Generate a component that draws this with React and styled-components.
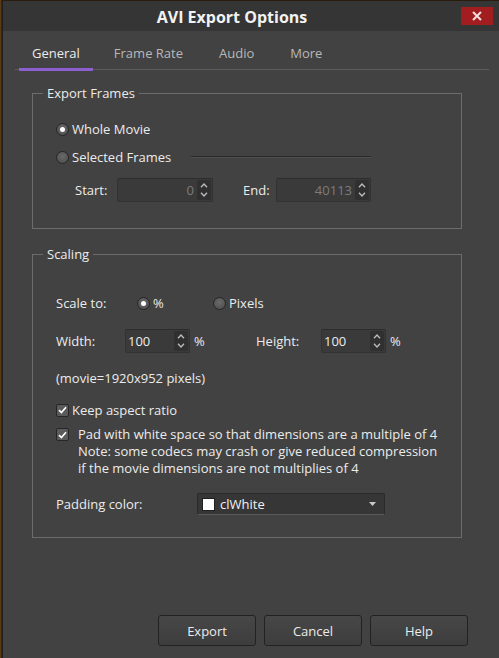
import React from 'react';
import styled, { createGlobalStyle } from 'styled-components';

const GlobalStyle = createGlobalStyle`
  html, body {
    margin: 0;
    padding: 0;
    background: #1c140c;
  }
  body {
    font-family: "Open Sans", "Noto Sans", sans-serif;
    font-size: 12px;
    color: #e8e8e8;
  }
`;

const Desktop = styled.div`
  width: 499px;
  height: 658px;
  overflow: hidden;
  padding: 1px 0 0 2px;
  box-sizing: border-box;
  background: linear-gradient(90deg, #6a4418 0, #2a1c0c 2px);
`;

const Window = styled.div`
  height: 657px;
  display: flex;
  flex-direction: column;
  background: #424242;
  border-left: 1px solid #1f1f1f;
  box-sizing: border-box;
`;

const TitleBar = styled.div`
  height: 30px;
  flex-shrink: 0;
  display: flex;
  align-items: center;
  background: #353535;
`;

const Title = styled.div`
  flex: 1;
  text-align: center;
  font-size: 16px;
  font-weight: 700;
  color: #f2f2f2;
  padding-top: 1px;
`;

const CloseButton = styled.div`
  width: 32px;
  height: 18px;
  margin: 0 6px 0 0;
  background: #a21d1f;
  display: flex;
  align-items: center;
  justify-content: center;
`;

const TabBar = styled.div`
  display: flex;
  margin: 0 10px 0 12px;
  height: 39px;
  border-bottom: 1px solid #5c5c5c;
  box-sizing: border-box;
`;

const Tab = styled.div`
  padding: 6px 13px 0;
  margin: 0 4px -2px ${p => 4 + (p.$extra || 0)}px;
  display: flex;
  align-items: center;
  font-size: 13px;
  color: ${p => (p.$active ? '#ececec' : '#b8b8b8')};
  border-bottom: 3px solid ${p => (p.$active ? '#8b5fcf' : 'transparent')};
`;

const Body = styled.div`
  padding: 0 37px 0 29px;
  flex: 1;
  display: flex;
  flex-direction: column;
`;

const Group = styled.fieldset`
  margin: ${p => p.$top}px 0 0 0;
  padding: 0 0 ${p => p.$bottom}px 23px;
  border: 1px solid #6c6c6c;
  min-width: 0;
`;

const Legend = styled.legend`
  margin-left: -13px;
  padding: 0 4px;
  font-size: 13px;
  line-height: 16px;
  color: #ececec;
`;

const Row = styled.div`
  display: flex;
  align-items: ${p => (p.$top_align ? 'flex-start' : 'center')};
  height: ${p => p.$h || 20}px;
  margin-top: ${p => p.$top}px;
  padding-left: ${p => p.$indent || 0}px;
`;

const Label = styled.span`
  font-size: 13px;
  color: #ececec;
  width: ${p => (p.$w ? `${p.$w}px` : 'auto')};
  flex-shrink: 0;
`;

const RadioCircle = styled.span`
  width: 13px;
  height: 13px;
  border-radius: 50%;
  box-sizing: border-box;
  border: 1px solid #262626;
  background: radial-gradient(circle at 50% 40%, #6a6a6a, #4a4a4a);
  display: flex;
  align-items: center;
  justify-content: center;
  margin-right: 3px;
  flex-shrink: 0;
  &::after {
    content: '';
    width: 5px;
    height: 5px;
    border-radius: 50%;
    background: ${p => (p.$on ? '#ffffff' : 'transparent')};
  }
`;

const Radio = styled.span`
  display: flex;
  align-items: center;
  width: ${p => (p.$w ? `${p.$w}px` : 'auto')};
  font-size: 13px;
  color: #ececec;
`;

const Box = styled.span`
  width: 13px;
  height: 13px;
  box-sizing: border-box;
  border: 1px solid #262626;
  border-radius: 2px;
  background: #5a5a5a;
  display: flex;
  align-items: center;
  justify-content: center;
  margin-right: ${p => p.$gap}px;
  margin-top: ${p => p.$drop || 0}px;
  flex-shrink: 0;
`;

const Divider = styled.div`
  flex: 1;
  height: 0;
  margin: 0 90px 0 20px;
  border-top: 1px solid #2a2a2a;
  border-bottom: 1px solid #4e4e4e;
`;

const Spin = styled.div`
  width: ${p => p.$w}px;
  height: 24px;
  box-sizing: border-box;
  display: flex;
  align-items: stretch;
  background: #3a3a3a;
  border: 1px solid #323232;
  border-top-color: #2c2c2c;
  border-radius: 2px;
  margin-left: ${p => p.$left || 0}px;
  margin-right: ${p => p.$right || 0}px;
  flex-shrink: 0;
`;

const SpinValue = styled.span`
  flex: 1;
  display: flex;
  align-items: center;
  justify-content: ${p => (p.$right ? 'flex-end' : 'flex-start')};
  padding: 0 3px 0 2px;
  font-size: 13px;
  color: ${p => (p.$disabled ? '#7c7c7c' : '#ececec')};
`;

const SpinArrows = styled.span`
  width: 14px;
  margin: 1px 1px 1px 0;
  padding: 3px 0;
  box-sizing: border-box;
  background: #303030;
  border-radius: 2px;
  display: flex;
  flex-direction: column;
  align-items: center;
  justify-content: space-between;
`;

const Note = styled.div`
  font-size: 13px;
  line-height: 17px;
  color: #ececec;
`;

const Combo = styled.div`
  width: 188px;
  height: 22px;
  box-sizing: border-box;
  display: flex;
  align-items: center;
  padding: 0 8px 0 4px;
  background: #363636;
  border: 1px solid #2a2a2a;
  border-bottom-color: #5a5a5a;
  border-radius: 2px;
  font-size: 13px;
  color: #f0f0f0;
`;

const Swatch = styled.span`
  width: 13px;
  height: 13px;
  box-sizing: border-box;
  background: #ffffff;
  border: 1px solid #202020;
  margin-right: 5px;
`;

const ComboText = styled.span`
  flex: 1;
`;

const Footer = styled.div`
  margin-top: auto;
  display: flex;
  justify-content: flex-end;
  gap: 8px;
  padding: 0 31px 12px 0;
`;

const Button = styled.div`
  width: 98px;
  height: 31px;
  box-sizing: border-box;
  display: flex;
  align-items: center;
  justify-content: center;
  background: linear-gradient(#474747, #3d3d3d);
  border: 1px solid #222;
  border-radius: 3px;
  font-size: 13px;
  color: #ececec;
`;

const Check = () => (
  <svg width="9" height="8" viewBox="0 0 9 8">
    <path d="M1 4.2 L3.4 6.5 L8 1.3" fill="none" stroke="#fff" strokeWidth="1.7" />
  </svg>
);

const Chevron = ({ up }) => (
  <svg width="8" height="5" viewBox="0 0 8 5">
    <path d={up ? 'M1 4.2 L4 1 L7 4.2' : 'M1 0.8 L4 4 L7 0.8'} fill="none" stroke="#bdbdbd" strokeWidth="1.3" />
  </svg>
);

function Spinner({ value, w, left, right, disabled, alignRight }) {
  return (
    <Spin $w={w} $left={left} $right={right}>
      <SpinValue $disabled={disabled} $right={alignRight}>{value}</SpinValue>
      <SpinArrows>
        <Chevron up />
        <Chevron />
      </SpinArrows>
    </Spin>
  );
}

export default function App() {
  return (
    <Desktop>
      <GlobalStyle />
      <Window>
        <TitleBar>
          <Title>AVI Export Options</Title>
          <CloseButton>
            <svg width="10" height="10" viewBox="0 0 10 10">
              <path d="M1 1 L9 9 M9 1 L1 9" stroke="#f4dede" strokeWidth="2" />
            </svg>
          </CloseButton>
        </TitleBar>

        <TabBar>
          <Tab $active>General</Tab>
          <Tab>Frame Rate</Tab>
          <Tab $extra={2}>Audio</Tab>
          <Tab $extra={2}>More</Tab>
        </TabBar>

        <Body>
          <Group $top={15} $bottom={26}>
            <Legend>Export Frames</Legend>
            <Row $top={18}>
              <Radio><RadioCircle $on />Whole Movie</Radio>
            </Row>
            <Row $top={8}>
              <Radio><RadioCircle />Selected Frames</Radio>
              <Divider />
            </Row>
            <Row $top={11} $h={24} $indent={19}>
              <Label $w={42}>Start:</Label>
              <Spinner value="0" w={96} right={30} disabled alignRight />
              <Label $w={33}>End:</Label>
              <Spinner value="40113" w={95} disabled alignRight />
            </Row>
          </Group>

          <Group $top={17} $bottom={22}>
            <Legend>Scaling</Legend>
            <Row $top={31}>
              <Label $w={81}>Scale to:</Label>
              <Radio $w={76}><RadioCircle $on />%</Radio>
              <Radio><RadioCircle />Pixels</Radio>
            </Row>
            <Row $top={16} $h={24}>
              <Label $w={69}>Width:</Label>
              <Spinner value="100" w={65} right={4} />
              <Label $w={62}>%</Label>
              <Label $w={65}>Height:</Label>
              <Spinner value="100" w={65} right={4} />
              <Label>%</Label>
            </Row>
            <Row $top={16} $h={18}>
              <Label>(movie=1920x952 pixels)</Label>
            </Row>
            <Row $top={14} $h={18}>
              <Box $gap={3}><Check /></Box>
              <Label>Keep aspect ratio</Label>
            </Row>
            <Row $top={7} $h={51} $top_align>
              <Box $gap={9} $drop={2}><Check /></Box>
              <Note>
                Pad with white space so that dimensions are a multiple of 4<br />
                Note: some codecs may crash or give reduced compression<br />
                if the movie dimensions are not multiplies of 4
              </Note>
            </Row>
            <Row $top={16} $h={22}>
              <Label $w={141}>Padding color:</Label>
              <Combo>
                <Swatch />
                <ComboText>clWhite</ComboText>
                <svg width="7" height="4" viewBox="0 0 7 4">
                  <path d="M0 0 L7 0 L3.5 4 Z" fill="#c8c8c8" />
                </svg>
              </Combo>
            </Row>
          </Group>
        </Body>

        <Footer>
          <Button>Export</Button>
          <Button>Cancel</Button>
          <Button>Help</Button>
        </Footer>
      </Window>
    </Desktop>
  );
}
